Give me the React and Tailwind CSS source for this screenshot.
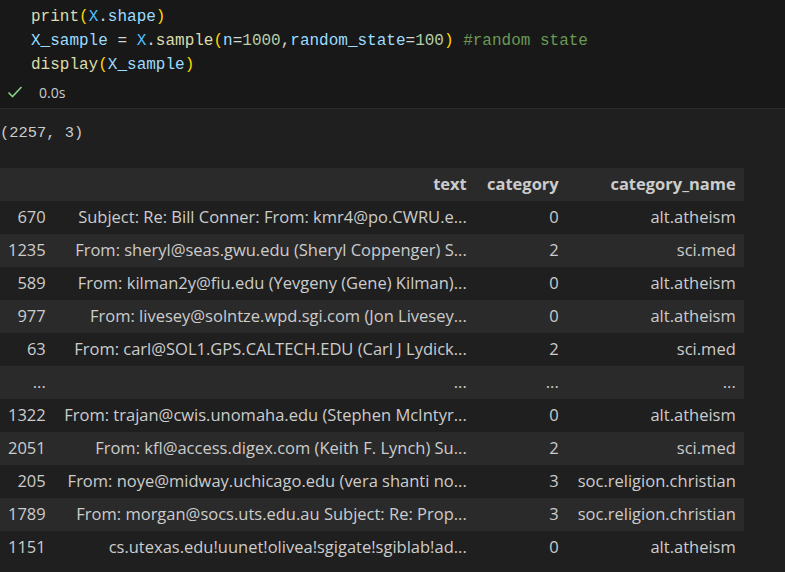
import React from 'react';

const rows = [
  ['670', 'Subject: Re: Bill Conner: From: kmr4@po.CWRU.e...', '0', 'alt.atheism'],
  ['1235', 'From: sheryl@seas.gwu.edu (Sheryl Coppenger) S...', '2', 'sci.med'],
  ['589', 'From: kilman2y@fiu.edu (Yevgeny (Gene) Kilman)...', '0', 'alt.atheism'],
  ['977', 'From: livesey@solntze.wpd.sgi.com (Jon Livesey...', '0', 'alt.atheism'],
  ['63', 'From: carl@SOL1.GPS.CALTECH.EDU (Carl J Lydick...', '2', 'sci.med'],
  ['...', '...', '...', '...'],
  ['1322', 'From: trajan@cwis.unomaha.edu (Stephen McIntyr...', '0', 'alt.atheism'],
  ['2051', 'From: kfl@access.digex.com (Keith F. Lynch) Su...', '2', 'sci.med'],
  ['205', 'From: noye@midway.uchicago.edu (vera shanti no...', '3', 'soc.religion.christian'],
  ['1789', 'From: morgan@socs.uts.edu.au Subject: Re: Prop...', '3', 'soc.religion.christian'],
  ['1151', 'cs.utexas.edu!uunet!olivea!sgigate!sgiblab!ad...', '0', 'alt.atheism'],
];

const mono = { fontFamily: '"Liberation Mono", "DejaVu Sans Mono", monospace' };

function Code() {
  return (
    <div className="bg-[#181818] pt-[5px] text-[16px] leading-[24px] pl-[31px] whitespace-pre" style={mono}>
      <div>
        <span className="text-[#dcdcaa]">print</span>
        <span className="text-[#ffd700]">(</span>
        <span className="text-[#4fc1ff]">X</span>
        <span className="text-[#d4d4d4]">.</span>
        <span className="text-[#9cdcfe]">shape</span>
        <span className="text-[#ffd700]">)</span>
      </div>
      <div>
        <span className="text-[#9cdcfe]">X_sample</span>
        <span className="text-[#d4d4d4]"> = </span>
        <span className="text-[#4fc1ff]">X</span>
        <span className="text-[#d4d4d4]">.</span>
        <span className="text-[#dcdcaa]">sample</span>
        <span className="text-[#ffd700]">(</span>
        <span className="text-[#9cdcfe]">n</span>
        <span className="text-[#d4d4d4]">=</span>
        <span className="text-[#b5cea8]">1000</span>
        <span className="text-[#d4d4d4]">,</span>
        <span className="text-[#9cdcfe]">random_state</span>
        <span className="text-[#d4d4d4]">=</span>
        <span className="text-[#b5cea8]">100</span>
        <span className="text-[#ffd700]">)</span>
        <span className="text-[#6a9955]"> #random state</span>
      </div>
      <div>
        <span className="text-[#dcdcaa]">display</span>
        <span className="text-[#ffd700]">(</span>
        <span className="text-[#9cdcfe]">X_sample</span>
        <span className="text-[#ffd700]">)</span>
      </div>
    </div>
  );
}

export default function App() {
  const sans = { fontFamily: '"Open Sans", "Noto Sans", sans-serif' };
  return (
    <div className="w-[785px] h-[572px] overflow-hidden bg-[#1f1f1f] text-[#cccccc]">
      <Code />
      <div className="bg-[#181818] h-[32px] flex items-center border-b border-[#2b2b2b]">
        <svg width="16" height="16" viewBox="0 0 16 16" className="ml-[7px] mt-[-2px]">
          <path d="M1.5 8.5 L5.5 12.5 L14.5 3" fill="none" stroke="#89d185" strokeWidth="1.6" />
        </svg>
        <span className="ml-[16px] text-[14px] text-[#cccccc]" style={sans}>0.0s</span>
      </div>
      <div className="pt-[13px] text-[15.4px] leading-[22px] whitespace-pre" style={mono}>(2257, 3)</div>
      <table className="mt-[24px] border-collapse text-[16.5px] table-fixed" style={sans}>
        <colgroup>
          <col className="w-[53px]" />
          <col className="w-[421px]" />
          <col className="w-[92px]" />
          <col className="w-[177px]" />
        </colgroup>
        <thead>
          <tr className="h-[33px] bg-[#2a2a2a] font-bold">
            <th className="px-[8px] text-right"></th>
            <th className="px-[8px] text-right">text</th>
            <th className="px-[8px] text-right">category</th>
            <th className="px-[8px] text-right">category_name</th>
          </tr>
        </thead>
        <tbody>
          {rows.map((r, i) => (
            <tr key={i} className={`h-[33px] ${i % 2 === 1 ? 'bg-[#2a2a2a]' : 'bg-[#1f1f1f]'}`}>
              <td className="px-[8px] text-right whitespace-nowrap">{r[0]}</td>
              <td className="px-[8px] text-right whitespace-nowrap overflow-hidden">{r[1]}</td>
              <td className="px-[8px] text-right whitespace-nowrap">{r[2]}</td>
              <td className="px-[8px] text-right whitespace-nowrap">{r[3]}</td>
            </tr>
          ))}
        </tbody>
      </table>
    </div>
  );
}
